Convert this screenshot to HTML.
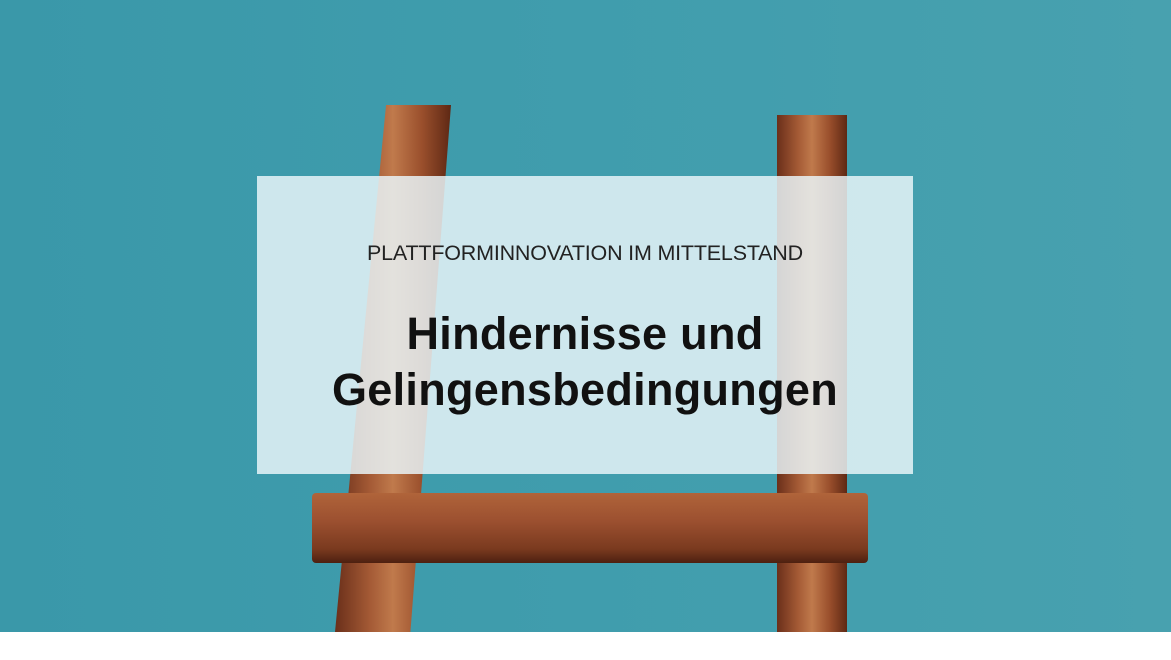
<!DOCTYPE html>
<html><head><meta charset="utf-8"><style>
html,body{margin:0;padding:0;width:1171px;height:660px;overflow:hidden;background:#fff;font-family:"Liberation Sans",sans-serif}
.bg{position:absolute;left:0;top:0;width:1171px;height:632px;background:linear-gradient(90deg,#3a98a9,#409dad 50%,#48a1af);overflow:hidden}
.w{position:absolute;background:linear-gradient(90deg,#6a2f1a,#a45a35 30%,#c07a4c 50%,#9a4f2c 75%,#5e2814);}
.box{position:absolute;left:257px;top:176px;width:656px;height:298px;background:rgba(233,246,249,0.84)}
.sub{position:absolute;left:257px;width:656px;top:241px;text-align:center;font-size:21.5px;color:#222;letter-spacing:-0.2px}
.t{position:absolute;left:257px;width:656px;top:306px;text-align:center;font-size:45px;font-weight:bold;color:#111;line-height:56px;letter-spacing:0.3px}
</style></head><body>
<div class="bg">
<div class="w" style="left:335px;top:105px;width:116px;height:527px;clip-path:polygon(44% 0,100% 0,65% 100%,0 100%)"></div>
<div class="w" style="left:777px;top:115px;width:70px;height:520px"></div>
<div class="w" style="left:312px;top:493px;width:556px;height:70px;border-radius:4px;background:linear-gradient(180deg,#b0643a,#9c5030 40%,#7a3a1f 80%,#4d2010)"></div>
</div>
<div class="box"></div>
<div class="sub">PLATTFORMINNOVATION IM MITTELSTAND</div>
<div class="t">Hindernisse und<br>Gelingensbedingungen</div>
</body></html>
